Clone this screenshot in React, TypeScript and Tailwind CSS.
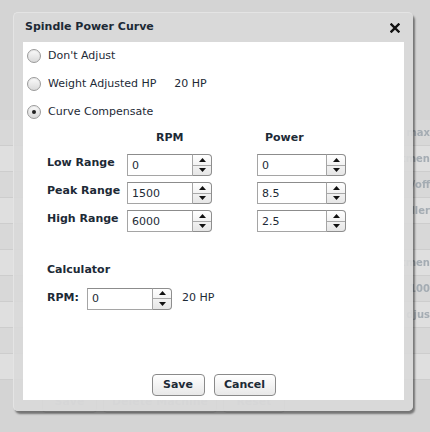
import { useState } from "react";

const pageRows = [
    { text: "max", bg: "bg-[#d8d8d8]" },
    { text: "tmen", bg: "bg-[#dfdfdf]" },
    { text: "/off", bg: "bg-[#d8d8d8]" },
    { text: "ller", bg: "bg-[#dfdfdf]" },
    { text: "", bg: "bg-[#d8d8d8]" },
    { text: "tmen", bg: "bg-[#dfdfdf]" },
    { text: "100", bg: "bg-[#d8d8d8]" },
    { text: "djus", bg: "bg-[#dfdfdf]" },
    { text: "", bg: "bg-[#d8d8d8]" },
    { text: "", bg: "bg-[#dfdfdf]" },
];

function Radio({ checked, onClick }: { checked: boolean; onClick: () => void }) {
    return (
        <button
            onClick={onClick}
            className="flex h-[14px] w-[14px] items-center justify-center rounded-full border border-[#9a9a9a] bg-gradient-to-b from-[#fbfbfb] to-[#d9d9d9] shadow-[inset_0_1px_1px_rgba(0,0,0,0.08)]"
        >
            {checked && <span className="h-[4px] w-[4px] rounded-full bg-[#222]" />}
        </button>
    );
}

function Spinner({ value, width }: { value: string; width: string }) {
    return (
        <div className="flex h-[22px]">
            <input
                defaultValue={value}
                className={`${width} h-full border border-[#a5a5a5] border-t-[#8c8c8c] bg-white pl-[4px] text-[11px] text-[#1d2a36] outline-none`}
            />
            <div className="flex h-full w-[19px] flex-col rounded-r-[4px] border border-l-0 border-[#8e8e8e] bg-gradient-to-b from-white to-[#e6e6e6]">
                <div className="flex flex-1 items-center justify-center border-b border-[#a8a8a8]">
                    <svg width="7" height="4" viewBox="0 0 7 4">
                        <path d="M0 4 L3.5 0 L7 4 Z" fill="#111" />
                    </svg>
                </div>
                <div className="flex flex-1 items-center justify-center">
                    <svg width="7" height="4" viewBox="0 0 7 4">
                        <path d="M0 0 L7 0 L3.5 4 Z" fill="#111" />
                    </svg>
                </div>
            </div>
        </div>
    );
}

function RangeRow({ label, rpm, power }: { label: string; rpm: string; power: string }) {
    return (
        <div className="flex h-[22px] items-center">
            <span className="w-[80px] pb-[3px] text-[11px] font-bold text-[#1d2a36]">{label}</span>
            <Spinner value={rpm} width="w-[66px]" />
            <div className="w-[45px]" />
            <Spinner value={power} width="w-[70px]" />
        </div>
    );
}

export default function App() {
    const [mode, setMode] = useState(2);
    const options = ["Don't Adjust", "Weight Adjusted HP", "Curve Compensate"];

    return (
        <div className="relative h-[432px] w-[430px] overflow-hidden bg-[#d4d4d4] font-['DejaVu_Sans',sans-serif]">
            {/* Faded page behind the modal */}
            <div className="flex flex-col pt-[120px]">
                {pageRows.map((row, i) => (
                    <div
                        key={i}
                        className={`flex h-[26px] items-center justify-end border-b border-[#cdcdcd] ${row.bg}`}
                    >
                        <span className="whitespace-nowrap text-[10px] font-bold text-[#a4acb3] blur-[0.5px]">
                            {row.text}
                        </span>
                    </div>
                ))}
            </div>
            <div className="absolute left-[42px] top-[392px] flex gap-[6px] text-[11px] font-bold text-[#b3b9be] blur-[0.4px]">
                <div className="flex h-[21px] w-[55px] items-end justify-center rounded-[4px] border border-[#c4c4c4] pb-[2px]">Save</div>
                <div className="flex h-[21px] w-[114px] items-end justify-center rounded-[4px] border border-[#c4c4c4] pb-[2px]">Delete Machine</div>
                <div className="flex h-[21px] w-[62px] items-end justify-center rounded-[4px] border border-[#c4c4c4] pb-[2px]">Reset</div>
            </div>

            {/* Dialog */}
            <div className="absolute left-[13px] top-[12px] flex h-[399px] w-[400px] flex-col rounded-[5px] border-l border-t border-[#e4e4e4] bg-[#d9d9d9]/90 shadow-[2px_3px_2px_rgba(0,0,0,0.45)]">
                <div className="flex h-[29px] items-center justify-between pl-[11px] pr-[13px]">
                    <span className="text-[11px] font-bold text-[#1d2a36]">Spindle Power Curve</span>
                    <svg width="10" height="10" viewBox="0 0 10 10">
                        <path d="M1.5 1.5 L8.5 8.5 M8.5 1.5 L1.5 8.5" stroke="#111" strokeWidth="2.4" strokeLinecap="square" />
                    </svg>
                </div>

                <div className="mx-[9px] flex h-[358px] flex-col bg-white">
                    {options.map((opt, i) => (
                        <div key={opt} className="flex h-[28px] items-center pl-[4px]">
                            <Radio checked={mode === i} onClick={() => setMode(i)} />
                            <span className="ml-[7px] text-[11px] text-[#1d2a36]">{opt}</span>
                            {i === 1 && <span className="ml-[18px] text-[11px] text-[#1d2a36]">20 HP</span>}
                        </div>
                    ))}

                    <div className="flex h-[24px] items-center pl-[24px] text-[11px] font-bold text-[#1d2a36]">
                        <span className="w-[80px]" />
                        <span className="w-[130px] pl-[29px]">RPM</span>
                        <span className="pl-[8px]">Power</span>
                    </div>

                    <div className="mt-[4px] flex flex-col gap-[6px] pl-[24px]">
                        <RangeRow label="Low Range" rpm="0" power="0" />
                        <RangeRow label="Peak Range" rpm="1500" power="8.5" />
                        <RangeRow label="High Range" rpm="6000" power="2.5" />
                    </div>

                    <div className="mt-[30px] pl-[24px] text-[11px] font-bold text-[#1d2a36]">Calculator</div>

                    <div className="mt-[9px] flex items-center pl-[24px]">
                        <span className="w-[40px] text-[11px] font-bold text-[#1d2a36]">RPM:</span>
                        <Spinner value="0" width="w-[66px]" />
                        <span className="ml-[10px] text-[11px] text-[#1d2a36]">20 HP</span>
                    </div>

                    <div className="mt-auto mb-[4px] flex justify-center gap-[9px]">
                        <button className="h-[22px] w-[53px] rounded-[4px] border border-[#8a8a8a] bg-gradient-to-b from-white to-[#e8e8e8] text-[11px] font-bold text-[#1d2a36]">
                            Save
                        </button>
                        <button className="h-[22px] w-[62px] rounded-[4px] border border-[#8a8a8a] bg-gradient-to-b from-white to-[#e8e8e8] text-[11px] font-bold text-[#1d2a36]">
                            Cancel
                        </button>
                    </div>
                </div>
            </div>
        </div>
    );
}
